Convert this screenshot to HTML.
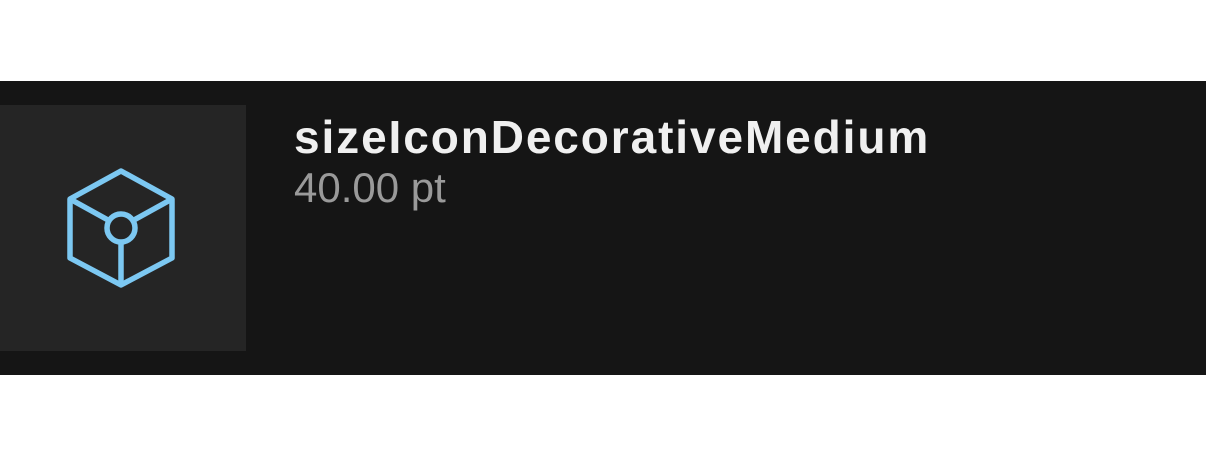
<!DOCTYPE html><html><head><style>
body{margin:0;width:1206px;height:456px;background:#fff;position:relative;overflow:hidden;font-family:"Liberation Sans",Arial,sans-serif}
.band{position:absolute;left:0;top:81px;width:1206px;height:294px;background:#151515}
.tile{position:absolute;left:0;top:105px;width:246px;height:246px;background:#252525}
.t{position:absolute;left:294px;top:110px;color:#f0f0f0;font-weight:bold;font-size:46px;line-height:54px;letter-spacing:1.9px;white-space:nowrap}
.s{position:absolute;left:294px;top:163px;color:#9a9a9a;font-size:42px;line-height:50px;white-space:nowrap}
svg{position:absolute;left:0;top:0}
</style></head><body>
<div class="band"></div><div class="tile"></div>
<svg width="246" height="456"><g fill="none" stroke="#7cc8f2" stroke-width="5.5" stroke-linejoin="round">
<polygon points="121,171 172,199 172,258 121,285 70,258 70,199"/>
<circle cx="121" cy="228" r="14"/>
<line x1="70" y1="199" x2="108" y2="220"/><line x1="172" y1="199" x2="134" y2="220"/><line x1="121" y1="242" x2="121" y2="285"/>
</g></svg>
<div class="t">sizeIconDecorativeMedium</div>
<div class="s">40.00 pt</div>
</body></html>
